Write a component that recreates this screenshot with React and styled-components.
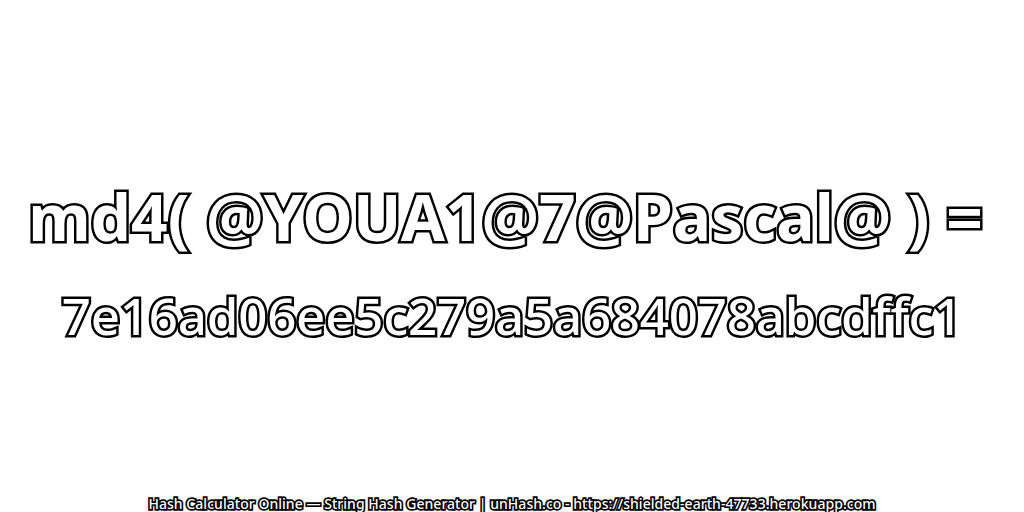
import React from "react";
import styled, { createGlobalStyle } from "styled-components";

const Global = createGlobalStyle`
  html, body { margin: 0; padding: 0; background: #fff; }
  #root { width: 1024px; height: 512px; overflow: hidden; }
`;

const Page = styled.main`
  width: 1024px;
  height: 512px;
  display: flex;
  flex-direction: column;
  align-items: center;
  font-family: "Noto Sans", "Open Sans", sans-serif;
  background: #fff;
`;

const Hero = styled.div`
  flex: 1;
  display: flex;
  flex-direction: column;
  align-items: center;
  padding-top: 176px;
  gap: 24px;
`;

const OutlineLine = styled.div`
  font-size: ${(p) => p.$size}px;
  line-height: ${(p) => p.$lh}px;
  font-weight: ${(p) => p.$weight};
  letter-spacing: ${(p) => p.$spacing}px;
  margin-right: ${(p) => p.$shift}px;
  white-space: nowrap;
  color: #fff;
  paint-order: stroke fill;
  -webkit-text-stroke: 5px #000;
`;

const Footer = styled.div`
  font-size: 14px;
  line-height: 16px;
  font-weight: 500;
  letter-spacing: 0.04px;
  white-space: nowrap;
  color: #fff;
  paint-order: stroke fill;
  -webkit-text-stroke: 3.4px #000;
`;

export default function App() {
  return (
    <Page>
      <Global />
      <Hero>
        <OutlineLine $size={64} $lh={82} $weight={700} $spacing={0} $shift={13}>md4( @YOUA1@7@Pascal@ ) =</OutlineLine>
        <OutlineLine $size={51} $lh={66} $weight={500} $spacing={-0.2} $shift={0}>7e16ad06ee5c279a5a684078abcdffc1</OutlineLine>
      </Hero>
      <Footer>Hash Calculator Online — String Hash Generator | unHash.co - https://shielded-earth-47733.herokuapp.com</Footer>
    </Page>
  );
}
